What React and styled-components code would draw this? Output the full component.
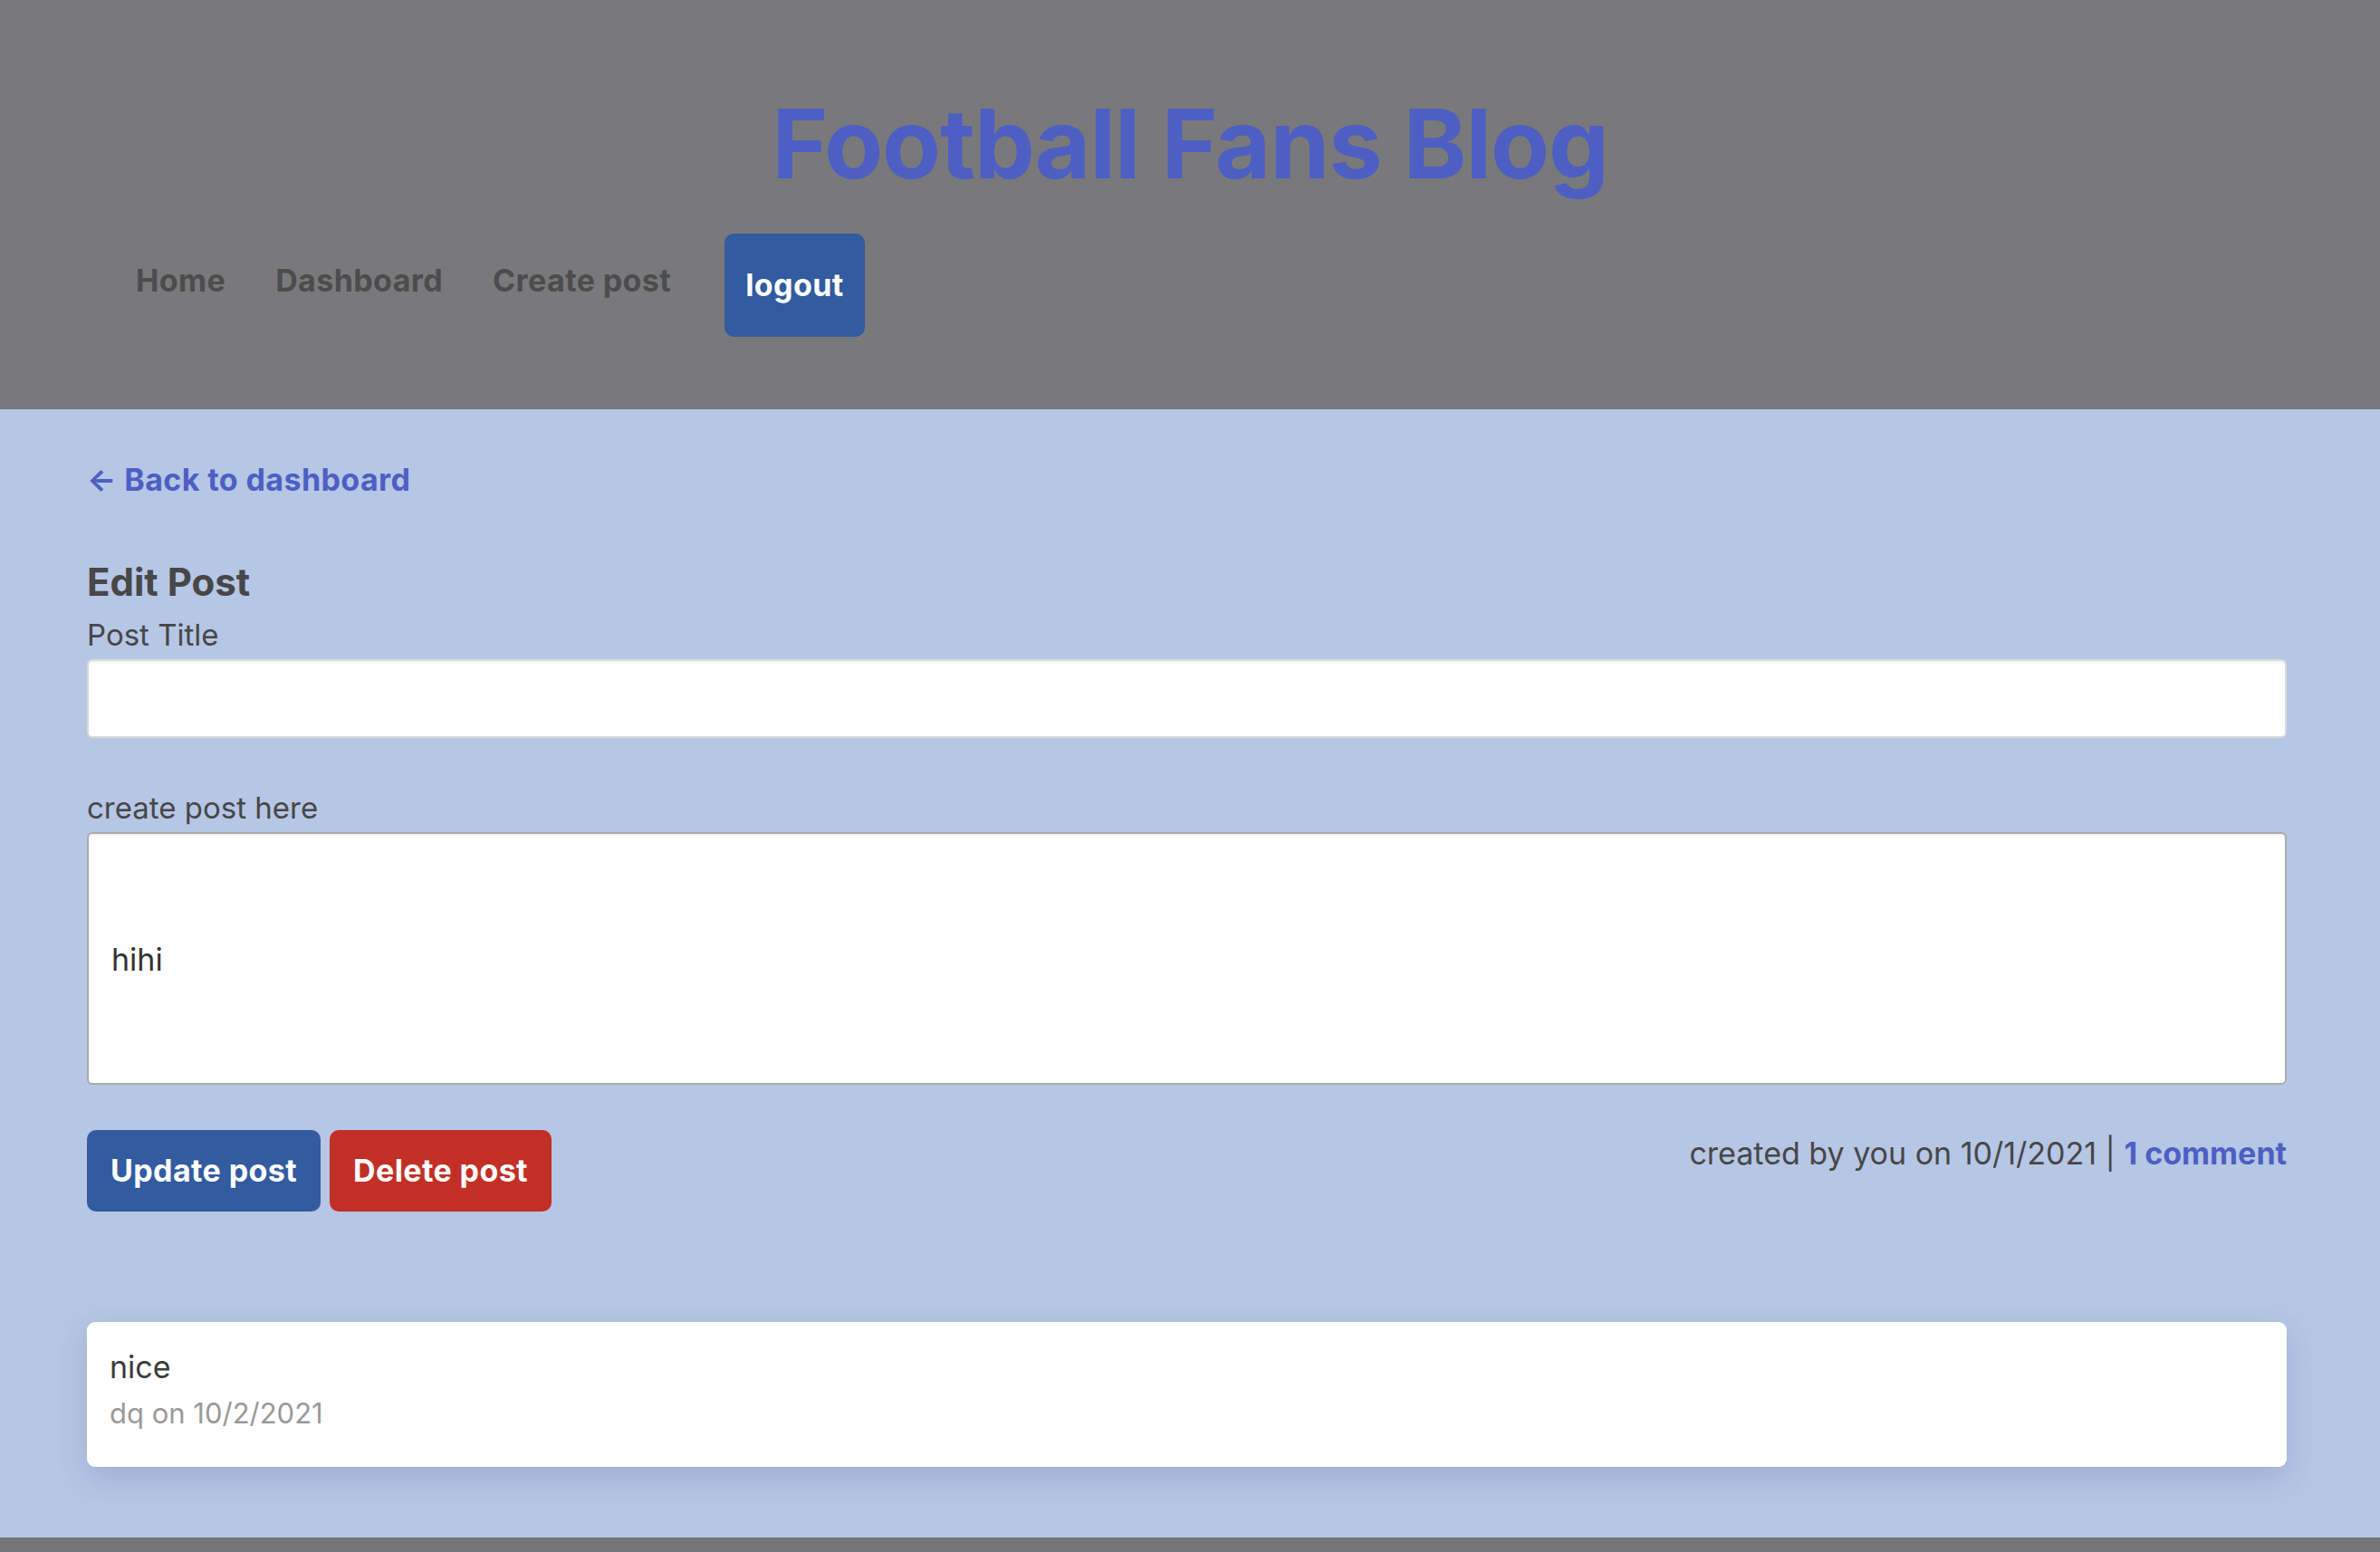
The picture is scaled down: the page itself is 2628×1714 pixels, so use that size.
import React from "react";
import styled, { createGlobalStyle } from "styled-components";

const GlobalStyle = createGlobalStyle`
  * { box-sizing: border-box; }
  body {
    margin: 0;
    font-family: Inter, "Liberation Sans", sans-serif;
    background: #b6c6e5;
    color: #474747;
  }
`;

// ---------------- Header ---------------- //

const Header = styled.header`
  background: #79797b;
  padding: 95px 150px 80px;
`;

const Title = styled.h1`
  margin: 0;
  text-align: center;
  font-size: 106px;
  line-height: 128px;
  font-weight: 700;
  letter-spacing: -1.1px;
  color: #4d5fc3;
`;

const Nav = styled.nav`
  display: flex;
  align-items: flex-start;
  gap: 55px;
  margin-top: 35px;
`;

const NavLink = styled.a`
  margin-top: 31px;
  font-size: 34px;
  line-height: 41px;
  font-weight: 700;
  letter-spacing: 0.4px;
  color: #4c4c4c;
  text-decoration: none;
`;

const Button = styled.button`
  border: none;
  border-radius: 10px;
  font-family: inherit;
  font-size: 34px;
  line-height: 41px;
  font-weight: 700;
  letter-spacing: 0.4px;
  color: #fff;
  background: ${({ $variant }) => ($variant === "danger" ? "#c22f27" : "#325ba0")};
  padding: ${({ $tall }) => ($tall ? "36px 23px 37px" : "24px 26px 25px")};
  margin-left: ${({ $offset }) => $offset || "0"};
  cursor: pointer;
`;

// ---------------- Main ---------------- //

const Main = styled.main`
  padding: 57px 103px 78px 96px;
`;

const BackLink = styled.a`
  display: inline-block;
  font-size: 34px;
  line-height: 41px;
  font-weight: 700;
  letter-spacing: 0.4px;
  color: #4d5fc3;
  text-decoration: none;
`;

const Heading = styled.h2`
  margin: 68px 0 0;
  font-size: 42px;
  line-height: 50px;
  font-weight: 700;
  color: #474747;
`;

const Label = styled.label`
  display: block;
  margin-top: ${({ $gap }) => $gap};
  margin-bottom: 7px;
  font-size: 33px;
  line-height: 40px;
  color: #474747;
`;

const TextInput = styled.input`
  display: block;
  width: 100%;
  height: 87px;
  border: 2px solid #dadada;
  border-radius: 6px;
  background: #fff;
  box-shadow: inset 0 2px 3px rgba(0, 0, 0, 0.05);
  font-family: inherit;
  font-size: 34px;
  padding: 0 25px;
  color: #333;
`;

const TextArea = styled.textarea`
  display: block;
  width: 100%;
  height: 279px;
  border: 2px solid #ababab;
  border-radius: 6px;
  background: #fff;
  box-shadow: inset 0 2px 3px rgba(0, 0, 0, 0.05);
  font-family: inherit;
  font-size: 34px;
  line-height: 41px;
  padding: 118px 25px 0;
  color: #333;
  resize: none;
`;

const ActionRow = styled.div`
  display: flex;
  justify-content: space-between;
  align-items: flex-start;
  margin-top: 50px;
`;

const ButtonGroup = styled.div`
  display: flex;
  gap: 10px;
`;

const Meta = styled.p`
  margin: 5px 0 0;
  font-size: 34px;
  line-height: 41px;
  color: #474747;
`;

const MetaLink = styled.a`
  font-weight: 700;
  color: #4d5fc3;
  text-decoration: none;
`;

const CommentCard = styled.div`
  margin-top: 122px;
  background: #fff;
  border-radius: 9px;
  padding: 29px 25px 40px;
  box-shadow: 0 12px 34px rgba(50, 70, 120, 0.18);
`;

const CommentText = styled.p`
  margin: 0;
  font-size: 34px;
  line-height: 41px;
  color: #3c3c3c;
`;

const CommentMeta = styled.p`
  margin: 12px 0 0;
  font-size: 31px;
  line-height: 38px;
  color: #999;
`;

const Footer = styled.footer`
  height: 60px;
  background: #757577;
`;

// ---------------- Page ---------------- //

const App = () => {
  return (
    <>
      <GlobalStyle />
      <Header>
        <Title>Football Fans Blog</Title>
        <Nav>
          <NavLink href="#">Home</NavLink>
          <NavLink href="#">Dashboard</NavLink>
          <NavLink href="#">Create post</NavLink>
          <Button $tall $offset="4px">logout</Button>
        </Nav>
      </Header>

      <Main>
        <BackLink href="#">← Back to dashboard</BackLink>
        <Heading>Edit Post</Heading>

        <Label $gap="13px">Post Title</Label>
        <TextInput type="text" />

        <Label $gap="57px">create post here</Label>
        <TextArea defaultValue="hihi" />

        <ActionRow>
          <ButtonGroup>
            <Button>Update post</Button>
            <Button $variant="danger">Delete post</Button>
          </ButtonGroup>
          <Meta>
            created by you on 10/1/2021 | <MetaLink href="#">1 comment</MetaLink>
          </Meta>
        </ActionRow>

        <CommentCard>
          <CommentText>nice</CommentText>
          <CommentMeta>dq on 10/2/2021</CommentMeta>
        </CommentCard>
      </Main>
      <Footer />
    </>
  );
};

export default App;
